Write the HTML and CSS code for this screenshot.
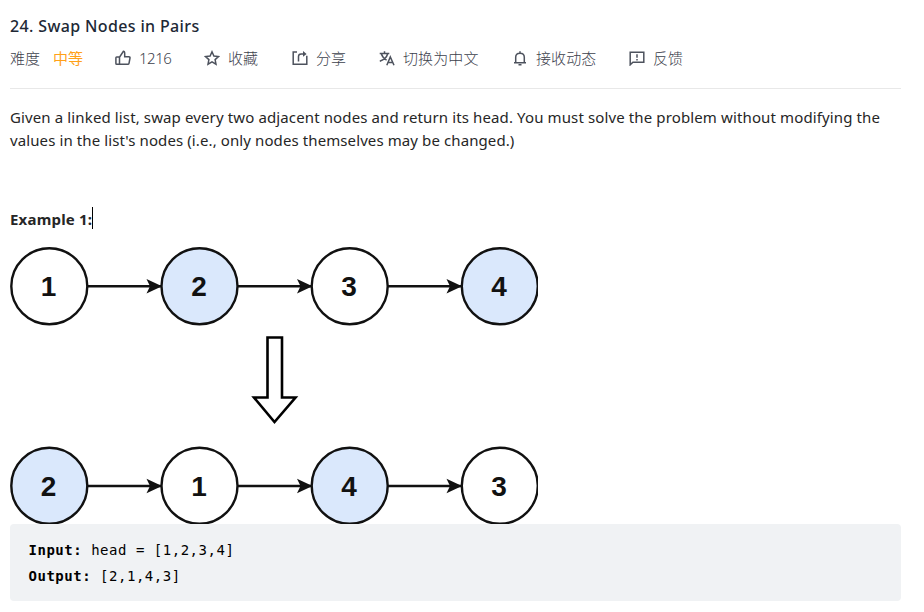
FILE: index.html
```
<!DOCTYPE html>
<html lang="zh-CN">
<head>
<meta charset="utf-8">
<title>24. Swap Nodes in Pairs</title>
<link rel="stylesheet" href="styles.css">
</head>
<body>
<main class="problem">
  <header class="head">
    <h1 class="title">24. Swap Nodes in Pairs</h1>
    <div class="toolbar">
      <span class="label">难度</span>
      <span class="level">中等</span>
      <span class="action like"><svg class="icon" viewBox="0 0 16 16"><path d="M4.500 7H1.700q-.8 0-.8.8v5.700q0 .8.800.8H12.800q1 0 1.200-1l1-5.300q.2-1.300-1.100-1.300H9.700V3.500q0-2.200-1.300-2.200L4.500 7.200zM4.500 7v7.300"/></svg><span class="count">1216</span></span>
      <span class="action star"><svg class="icon" viewBox="0 0 16 16"><path d="M8 1.800l1.900 4.200 4.600.5-3.400 3.100.9 4.600L8 11.900l-4 2.300.9-4.600L1.500 6.500l4.600-.5z"/></svg><span>收藏</span></span>
      <span class="action share"><svg class="icon" viewBox="0 0 16 16"><path d="M5 2H1.200v12.300h13.600V5.800M6.500 11.500V6.500q0-2.600 2.600-2.600H12.500"/><path class="solid" d="M11 1L14.600 3.900L11 6.800z"/></svg><span>分享</span></span>
      <span class="action lang"><svg class="icon" viewBox="0 0 16 16"><path d="M.7 3.400h9.600M5.500 1.300v2M2.300 3.800q1.400 4.300 5.300 6.400M8.700 3.800Q7.200 9.200.8 11.200M7.800 15.300l3.500-8.300 3.700 8.300M9 12.500h5"/></svg><span>切换为中文</span></span>
      <span class="action notify"><svg class="icon" viewBox="0 0 16 16"><path d="M2 12.700h12M3.700 12.700V7.300q0-4 4.300-4T12.300 7.300v5.400M8 1.300v2M6.500 14.800h3"/></svg><span>接收动态</span></span>
      <span class="action feedback"><svg class="icon" viewBox="0 0 16 16"><path d="M1.200 14.800V2.200h13.600v10.100H3.900zM8 4.300v3.400M8 8.900v1.600"/></svg><span>反馈</span></span>
    </div>
  </header>
  <p class="description"><span class="line first">Given a linked list, swap every two adjacent nodes and return its head. You must solve the problem without modifying the</span><span class="line second">values in the list's nodes (i.e., only nodes themselves may be changed.)</span></p>
  <div class="example"><strong>Example 1:</strong><i class="caret"></i></div>
  <svg class="diagram" viewBox="10 246 528 278">
    <g class="edges">
      <path d="M88 286.300H162M238 286.300H312M388 286.300H462M88 486H162M238 486H312M388 486H462"/>
      <path class="tip" d="M146.500 279L162 286.300L146.500 293.600L150 286.300zM297 279L312.500 286.300L297 293.600L300.500 286.300zM446.500 279L462 286.300L446.500 293.600L450 286.300z"/>
      <path class="tip" d="M146.500 478.700L162 486L146.500 493.300L150 486zM297 478.700L312.500 486L297 493.300L300.500 486zM446.500 478.700L462 486L446.500 493.300L450 486z"/>
    </g>
    <g class="nodes">
      <circle cx="49.300" cy="286.300" r="38"/>
      <circle class="blue" cx="199.500" cy="286.300" r="38"/>
      <circle cx="349.700" cy="286.300" r="38"/>
      <circle class="blue" cx="499.800" cy="286.300" r="38"/>
      <circle class="blue" cx="49.300" cy="485.700" r="38"/>
      <circle cx="199.500" cy="485.700" r="38"/>
      <circle class="blue" cx="349.700" cy="485.700" r="38"/>
      <circle cx="499.800" cy="485.700" r="38"/>
    </g>
    <g class="numbers">
      <text x="48.500" y="296.400">1</text><text x="199" y="296.400">2</text><text x="349" y="296.400">3</text><text x="499" y="296.400">4</text>
      <text x="48.500" y="496">2</text><text x="199" y="496">1</text><text x="349" y="496">4</text><text x="499" y="496">3</text>
    </g>
    <path class="down" d="M267.500 337.500H282V397.500H295.500L274.500 422L254 397.500H267.500z"/>
  </svg>
  <pre class="code"><b>Input:</b> head = [1,2,3,4]
<b>Output:</b> [2,1,4,3]</pre>
</main>
</body>
</html>
```
FILE: styles.css
```
body {
  margin: 0;
  background: #fff;
  color: #262626;
  font: 15px/23px "Noto Sans", "Noto Sans CJK SC", sans-serif;
}
.problem {
  width: 891px;
  padding: 14px 0 0 10px;
}
.head {
  height: 74px;
  border-bottom: 1px solid #e8e8e8;
}
.title {
  margin: 0;
  font-size: 16px;
  font-weight: 500;
  line-height: 24px;
  letter-spacing: 0.36px;
  color: #212835;
  white-space: nowrap;
}
.toolbar {
  display: flex;
  align-items: center;
  height: 24px;
  margin-top: 8px;
  font: 300 15px/24px "Noto Sans", "Noto Sans CJK SC", sans-serif;
  letter-spacing: 0.1px;
  color: #3c414c;
  white-space: nowrap;
}
.label { width: 43px; }
.level { width: 62px; color: #ffa119; font-weight: 400; }
.action {
  display: flex;
  align-items: center;
  gap: 8px;
}
.like { width: 89px; }
.star { width: 88px; }
.share { width: 87px; }
.lang { width: 133px; }
.notify { width: 117px; }
.icon {
  width: 16px;
  height: 16px;
  fill: none;
  stroke: #4d525d;
  stroke-width: 1.5;
}
.icon .solid { fill: #4d525d; stroke: none; }
.count { letter-spacing: -0.5px; }
.description {
  margin: 17px 0 0;
}
.line {
  display: block;
  white-space: nowrap;
}
.first { letter-spacing: 0.125px; }
.second { letter-spacing: 0.1px; }
.example {
  display: flex;
  align-items: center;
  height: 24px;
  margin-top: 55px;
  color: #262626;
  letter-spacing: 0.2px;
}
.caret {
  width: 1px;
  height: 22px;
  margin-top: -2px;
  background: #000;
}
.diagram {
  display: block;
  width: 528px;
  height: 278px;
  margin-top: 15px;
}
.edges { stroke: #111; stroke-width: 2.5; }
.edges .tip { stroke: none; fill: #111; }
.nodes { fill: #fff; stroke: #111; stroke-width: 2.4; }
.blue { fill: #dae8fc; }
.numbers {
  font: bold 28px "Liberation Sans", sans-serif;
  fill: #111;
  text-anchor: middle;
}
.down { fill: #fff; stroke: #000; stroke-width: 2.6; }
.code {
  box-sizing: border-box;
  height: 77px;
  margin: 0;
  padding: 13px 18px 13px 18.500px;
  border-radius: 4px;
  background: #f0f2f4;
  color: #000;
  font: 14px/26px "DejaVu Sans Mono", monospace;
  letter-spacing: 0.52px;
}
```
